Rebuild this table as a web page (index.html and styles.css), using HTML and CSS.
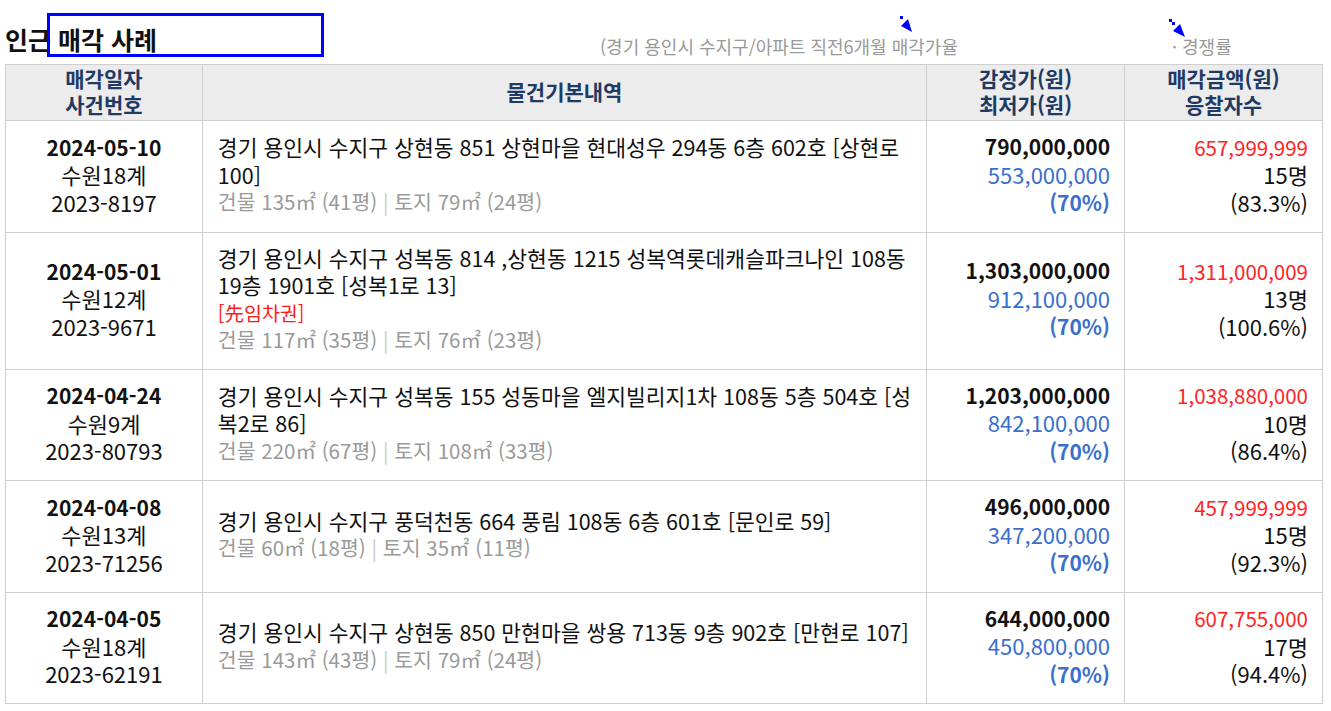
FILE: index.html
```html
<!DOCTYPE html>
<html lang="ko">
<head>
    <meta charset="UTF-8">
    <title>인근 매각 사례</title>
    <link rel="stylesheet" href="styles.css">
</head>
<body>
    <div class="page">
        <div class="title-bar">
            <h2 class="title">인근 매각 사례</h2>
            <span class="title-mark"></span>
            <span class="sub-rate">(경기 용인시 수지구/아파트 직전6개월 매각가율</span>
            <span class="sub-comp">· 경쟁률</span>
            <svg class="pointer pointer-a" width="16" height="18" viewBox="0 0 16 18">
                <rect x="2" y="1" width="3" height="3" fill="#0000ff"/>
                <polygon points="3,11 10,4 14,17" fill="#0000ff"/>
            </svg>
            <svg class="pointer pointer-b" width="22" height="22" viewBox="0 0 22 22">
                <rect x="1" y="1" width="3" height="3" fill="#0000ff"/>
                <rect x="4" y="4" width="3" height="3" fill="#0000ff"/>
                <polygon points="5,13 12,6 17,19" fill="#0000ff"/>
            </svg>
        </div>

        <table class="sale-table">
            <colgroup>
                <col class="c-date">
                <col class="c-item">
                <col class="c-price">
                <col class="c-result">
            </colgroup>
            <thead>
                <tr>
                    <th>매각일자<br>사건번호</th>
                    <th>물건기본내역</th>
                    <th>감정가(원)<br>최저가(원)</th>
                    <th>매각금액(원)<br>응찰자수</th>
                </tr>
            </thead>
            <tbody>
                <tr>
                    <td class="case"><b>2024-05-10</b><br>수원18계<br>2023-8197</td>
                    <td class="item">경기 용인시 수지구 상현동 851 상현마을 현대성우 294동 6층 602호 [상현로 100]<div class="area">건물 135㎡ (41평) <i>|</i> 토지 79㎡ (24평)</div></td>
                    <td class="price"><b>790,000,000</b><br><span class="low">553,000,000</span><br><b class="low">(70%)</b></td>
                    <td class="result"><span class="sold">657,999,999</span><br>15명<br>(83.3%)</td>
                </tr>
                <tr>
                    <td class="case"><b>2024-05-01</b><br>수원12계<br>2023-9671</td>
                    <td class="item">경기 용인시 수지구 성복동 814 ,상현동 1215 성복역롯데캐슬파크나인 108동 19층 1901호 [성복1로 13]<div class="flag">[先임차권]</div><div class="area">건물 117㎡ (35평) <i>|</i> 토지 76㎡ (23평)</div></td>
                    <td class="price"><b>1,303,000,000</b><br><span class="low">912,100,000</span><br><b class="low">(70%)</b></td>
                    <td class="result"><span class="sold">1,311,000,009</span><br>13명<br>(100.6%)</td>
                </tr>
                <tr>
                    <td class="case"><b>2024-04-24</b><br>수원9계<br>2023-80793</td>
                    <td class="item">경기 용인시 수지구 성복동 155 성동마을 엘지빌리지1차 108동 5층 504호 [성복2로 86]<div class="area">건물 220㎡ (67평) <i>|</i> 토지 108㎡ (33평)</div></td>
                    <td class="price"><b>1,203,000,000</b><br><span class="low">842,100,000</span><br><b class="low">(70%)</b></td>
                    <td class="result"><span class="sold">1,038,880,000</span><br>10명<br>(86.4%)</td>
                </tr>
                <tr>
                    <td class="case"><b>2024-04-08</b><br>수원13계<br>2023-71256</td>
                    <td class="item">경기 용인시 수지구 풍덕천동 664 풍림 108동 6층 601호 [문인로 59]<div class="area">건물 60㎡ (18평) <i>|</i> 토지 35㎡ (11평)</div></td>
                    <td class="price"><b>496,000,000</b><br><span class="low">347,200,000</span><br><b class="low">(70%)</b></td>
                    <td class="result"><span class="sold">457,999,999</span><br>15명<br>(92.3%)</td>
                </tr>
                <tr>
                    <td class="case"><b>2024-04-05</b><br>수원18계<br>2023-62191</td>
                    <td class="item">경기 용인시 수지구 상현동 850 만현마을 쌍용 713동 9층 902호 [만현로 107]<div class="area">건물 143㎡ (43평) <i>|</i> 토지 79㎡ (24평)</div></td>
                    <td class="price"><b>644,000,000</b><br><span class="low">450,800,000</span><br><b class="low">(70%)</b></td>
                    <td class="result"><span class="sold">607,755,000</span><br>17명<br>(94.4%)</td>
                </tr>
            </tbody>
        </table>
    </div>
</body>
</html>
```

FILE: styles.css
```css
/* Page */
body {
    margin: 0;
    font-family: "Noto Sans CJK KR", "Noto Sans", sans-serif;
    color: #111;
    background: #fff;
}

.page {
    padding: 0 9px 0 5px;
}

/* Title bar */
.title-bar {
    position: relative;
    display: flex;
    align-items: flex-end;
    height: 64px;
}

.title {
    margin: 0 0 9px;
    font-size: 25px;
    font-weight: 700;
    line-height: 32px;
}

.title-mark {
    position: absolute;
    left: 42px;
    top: 13px;
    width: 271px;
    height: 38px;
    border: 3px solid #0000ff;
}

.sub-rate,
.sub-comp {
    color: #999;
    font-size: 18px;
    line-height: 22px;
    margin-bottom: 7px;
}

.sub-rate {
    margin-left: 443px;
}

.sub-comp {
    margin-left: 214px;
}

.pointer {
    position: absolute;
}

.pointer-a {
    left: 893px;
    top: 15px;
}

.pointer-b {
    left: 1163px;
    top: 18px;
}

/* Table */
.sale-table {
    width: 1318px;
    border-collapse: collapse;
    font-size: 22px;
    line-height: 27.5px;
}

.c-date { width: 197px; }
.c-item { width: 725px; }
.c-price { width: 198px; }
.c-result { width: 198px; }

.sale-table th,
.sale-table td {
    border: 1px solid #cfcfcf;
}

.sale-table th {
    background: #ececec;
    color: #1f3a64;
    font-size: 21px;
    font-weight: 700;
    line-height: 26px;
    height: 52px;
    padding: 0 4px 3px;
}

.sale-table td {
    padding: 11px 14px 15px;
    vertical-align: middle;
    height: 83px;
}

.sale-table b {
    font-size: 21px;
    font-weight: 700;
}

.case {
    text-align: center;
}

.item {
    text-align: left;
    padding-left: 15px !important;
    font-size: 21.5px;
}

.area {
    color: #9a9a9a;
    font-size: 20.5px;
}

.area i {
    font-style: normal;
    color: #c8c8c8;
}

.flag {
    color: #ff1a1a;
    font-size: 19.5px;
}

.price,
.result {
    text-align: right;
}

.low {
    color: #3a6fce;
}

.sold {
    color: #ff2424;
    font-size: 20.5px;
}
```
